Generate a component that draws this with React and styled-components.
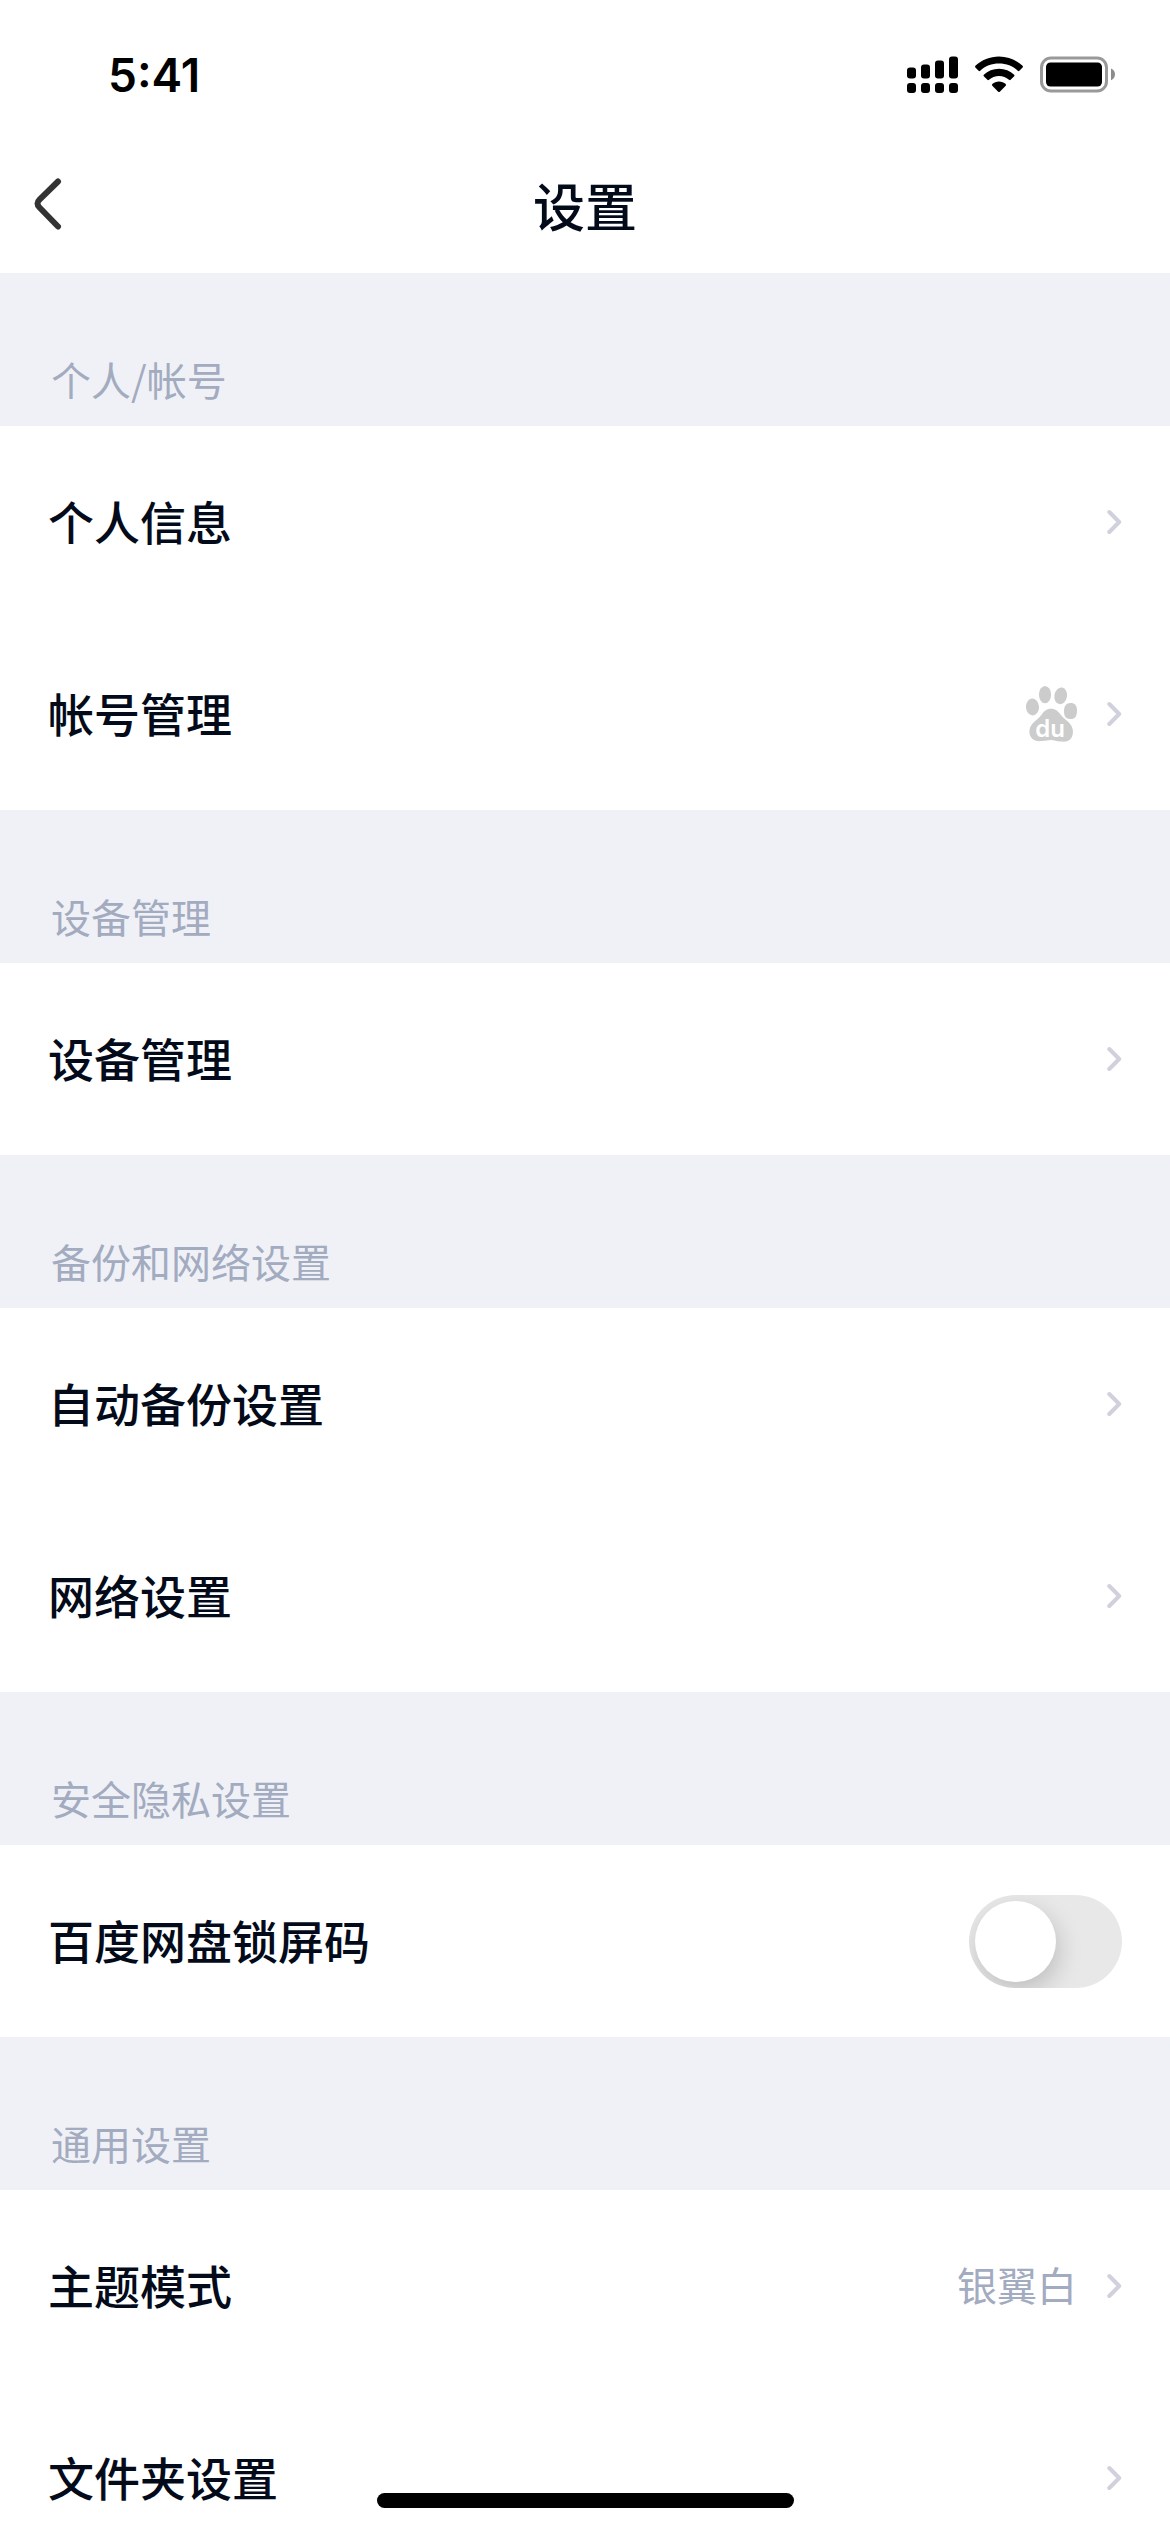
import React, { useState } from "react";
import styled, { createGlobalStyle } from "styled-components";

const GlobalStyle = createGlobalStyle`
  * {
    box-sizing: border-box;
  }

  body {
    margin: 0;
    background-color: #ffffff;
    font-family: "Noto Sans CJK SC", sans-serif;
    color: #030b1a;
  }
`;

const Screen = styled.div`
  display: flex;
  flex-direction: column;
  height: 100vh;
  overflow: hidden;
`;

const StatusBar = styled.div`
  display: flex;
  align-items: center;
  justify-content: space-between;
  height: 141px;
  flex-shrink: 0;
  padding: 8px 54px 0 108px;
`;

const Time = styled.span`
  font-family: Inter, sans-serif;
  font-size: 46px;
  font-weight: 600;
  line-height: 54px;
  color: #000000;
`;

const StatusIcons = styled.div`
  display: flex;
  align-items: center;
  gap: 17px;

  svg {
    display: block;
  }
`;

const NavBar = styled.header`
  display: grid;
  grid-template-columns: 1fr auto 1fr;
  align-items: center;
  height: 132px;
  flex-shrink: 0;
  padding: 0 32px;
`;

const BackButton = styled.button`
  justify-self: start;
  padding: 0 0 6px;
  border: none;
  background: none;
  cursor: pointer;

  svg {
    display: block;
  }
`;

const Title = styled.h1`
  margin: 0;
  padding-bottom: 4px;
  font-size: 52px;
  font-weight: 500;
  line-height: 72px;
`;

const Content = styled.main`
  flex: 1;
  min-height: 0;
  overflow-y: auto;
  scrollbar-width: none;
`;

const SectionTitle = styled.h2`
  display: flex;
  align-items: flex-end;
  height: 153px;
  margin: 0;
  padding: 0 51px 20px;
  background-color: #f0f1f6;
  color: #a2abbf;
  font-size: 40px;
  font-weight: 400;
  line-height: 54px;
`;

const Row = styled.div`
  display: flex;
  align-items: center;
  justify-content: space-between;
  height: 192px;
  padding: 0 48px;
  background-color: #ffffff;
  color: inherit;
  text-decoration: none;
`;

const RowLabel = styled.span`
  padding-bottom: 4px;
  font-size: 46px;
  font-weight: 500;
  line-height: 66px;
`;

const RowEnd = styled.span`
  display: flex;
  align-items: center;
  gap: 30px;

  svg {
    display: block;
  }
`;

const Value = styled.span`
  padding-bottom: 4px;
  color: #a2abbf;
  font-size: 40px;
  font-weight: 400;
  line-height: 54px;
`;

const Switch = styled.input`
  appearance: none;
  display: flex;
  align-items: center;
  justify-content: ${(props) => (props.checked ? "flex-end" : "flex-start")};
  width: 153px;
  height: 93px;
  margin: 0;
  padding: 6px;
  border-radius: 47px;
  overflow: hidden;
  background-color: ${(props) => (props.checked ? "#06a7ff" : "#e8e8e8")};
  cursor: pointer;

  &::before {
    content: "";
    width: 81px;
    height: 81px;
    border-radius: 50%;
    background-color: #ffffff;
    box-shadow: 3px 9px 24px rgba(0, 0, 0, 0.18);
  }
`;

const HomeIndicator = styled.div`
  position: fixed;
  bottom: 24px;
  left: 50%;
  width: 417px;
  height: 15px;
  margin-left: -208px;
  border-radius: 8px;
  background-color: #000000;
`;

const SignalIcon = () => (
  <svg width="51" height="38" viewBox="0 0 51 38" aria-hidden="true">
    <rect x="0" y="11.5" width="9" height="11" rx="3" />
    <rect x="14" y="8.5" width="9" height="14" rx="3" />
    <rect x="28" y="4.5" width="9" height="18" rx="3" />
    <rect x="42" y="0.5" width="9" height="22" rx="3" />
    <rect x="0" y="27" width="9" height="10" rx="3" />
    <rect x="14" y="27" width="9" height="10" rx="3" />
    <rect x="28" y="27" width="9" height="10" rx="3" />
    <rect x="42" y="27" width="9" height="10" rx="3" />
  </svg>
);

const WifiIcon = () => (
  <svg width="48" height="38" viewBox="0 0 48 38" aria-hidden="true">
    <path d="M24 0.5C33 0.5 41.5 4 47.6 9.8Q48.3 10.6 47.6 11.4L44.4 14.8Q43.6 15.5 42.8 14.8C37.8 10 31.2 7.6 24 7.6S10.2 10 5.2 14.8Q4.4 15.5 3.6 14.8L0.4 11.4Q-0.3 10.6 0.4 9.8C6.5 4 15 0.5 24 0.5Z" />
    <path d="M24 12.8C29.8 12.8 35.2 15 39.2 18.7Q39.9 19.5 39.2 20.3L35.6 23.8Q34.8 24.5 34 23.8C31.3 21.3 27.8 20 24 20S16.7 21.3 14 23.8Q13.2 24.5 12.4 23.8L8.8 20.3Q8.1 19.5 8.8 18.7C12.8 15 18.2 12.8 24 12.8Z" />
    <path d="M24 25.5C26.6 25.5 29 26.5 30.7 28.1Q31.4 28.9 30.7 29.7L24.8 35.7Q24 36.4 23.2 35.7L17.3 29.7Q16.6 28.9 17.3 28.1C19 26.5 21.4 25.5 24 25.5Z" />
  </svg>
);

const BatteryIcon = () => (
  <svg width="76" height="38" viewBox="0 0 76 38" aria-hidden="true">
    <rect x="1.5" y="2" width="65" height="33" rx="9.5" fill="none" stroke="#999999" strokeWidth="3" />
    <rect x="6" y="6.5" width="56" height="24" rx="4.5" />
    <path d="M71 12.5C73.5 13.5 75 15.5 75 18.3S73.5 23.3 71 24.2Z" fill="#8c8c8c" />
  </svg>
);

const BackIcon = () => (
  <svg width="32" height="52" viewBox="0 0 32 52" fill="none" aria-hidden="true">
    <path
      d="M26 3.5L7.5 21.6Q3.5 25.5 7.5 29.5L26 48.5"
      stroke="#333333"
      strokeWidth="6"
      strokeLinecap="round"
      strokeLinejoin="round"
    />
  </svg>
);

const ArrowIcon = () => (
  <svg width="15" height="26" viewBox="0 0 15 26" fill="none" aria-hidden="true">
    <path
      d="M2.3 3L12.2 13L2.3 23"
      stroke="#d0d1dc"
      strokeWidth="4"
      strokeLinecap="round"
      strokeLinejoin="round"
    />
  </svg>
);

const PawText = styled.text`
  font-family: Inter, sans-serif;
  font-size: 24px;
  font-weight: 600;
`;

const PawIcon = () => (
  <svg width="51" height="56" viewBox="0 0 51 56" fill="#cccccc" aria-hidden="true">
    <ellipse cx="6.5" cy="21" rx="6.5" ry="8.4" transform="rotate(-4 6.5 21)" />
    <ellipse cx="19" cy="8.6" rx="6.1" ry="8.6" />
    <ellipse cx="34.7" cy="9.8" rx="6.3" ry="8.4" transform="rotate(10 34.7 9.8)" />
    <path d="M44.5 17C49 17 51 19.5 51 24.5C51 30.5 49 33 44.5 33C40 33 38 30.5 38 25.5C38 20 40 17 44.5 17Z" />
    <path d="M25 22.8C29.5 22.8 32 25 34.5 28.6C37.5 33 41.5 34.5 44.5 38.5C47.5 42.5 47.8 48 45.3 52C43 55.6 39 56 34.5 55.6C30.5 55.2 28 54 25 54C22 54 19.5 54.8 16 55.1C11 55.5 7.5 55 5.2 51.6C2.5 47.5 3 42 6 38.3C9 34.7 12.5 33 15.5 28.8C18 25.2 20.5 22.8 25 22.8Z" />
    <PawText x="24" y="51" textAnchor="middle" fill="#ffffff">
      du
    </PawText>
  </svg>
);

const sections = [
  {
    title: "个人/帐号",
    rows: [{ label: "个人信息" }, { label: "帐号管理", icon: <PawIcon /> }],
  },
  { title: "设备管理", rows: [{ label: "设备管理" }] },
  {
    title: "备份和网络设置",
    rows: [{ label: "自动备份设置" }, { label: "网络设置" }],
  },
  {
    title: "安全隐私设置",
    rows: [{ label: "百度网盘锁屏码", isSwitch: true }],
  },
  {
    title: "通用设置",
    rows: [{ label: "主题模式", value: "银翼白" }, { label: "文件夹设置" }],
  },
];

const SwitchRow = ({ label }) => {
  const [checked, setChecked] = useState(false);

  return (
    <Row as="label">
      <RowLabel>{label}</RowLabel>
      <Switch
        type="checkbox"
        checked={checked}
        onChange={(e) => setChecked(e.target.checked)}
      />
    </Row>
  );
};

const LinkRow = ({ label, icon, value }) => (
  <Row as="a" href="#">
    <RowLabel>{label}</RowLabel>
    <RowEnd>
      {icon}
      {value && <Value>{value}</Value>}
      <ArrowIcon />
    </RowEnd>
  </Row>
);

const App = () => {
  return (
    <Screen>
      <GlobalStyle />
      <StatusBar>
        <Time>5:41</Time>
        <StatusIcons>
          <SignalIcon />
          <WifiIcon />
          <BatteryIcon />
        </StatusIcons>
      </StatusBar>
      <NavBar>
        <BackButton type="button" aria-label="返回">
          <BackIcon />
        </BackButton>
        <Title>设置</Title>
      </NavBar>
      <Content>
        {sections.map((section) => (
          <section key={section.title}>
            <SectionTitle>{section.title}</SectionTitle>
            {section.rows.map((row) =>
              row.isSwitch ? (
                <SwitchRow key={row.label} label={row.label} />
              ) : (
                <LinkRow key={row.label} {...row} />
              )
            )}
          </section>
        ))}
      </Content>
      <HomeIndicator />
    </Screen>
  );
};

export default App;
